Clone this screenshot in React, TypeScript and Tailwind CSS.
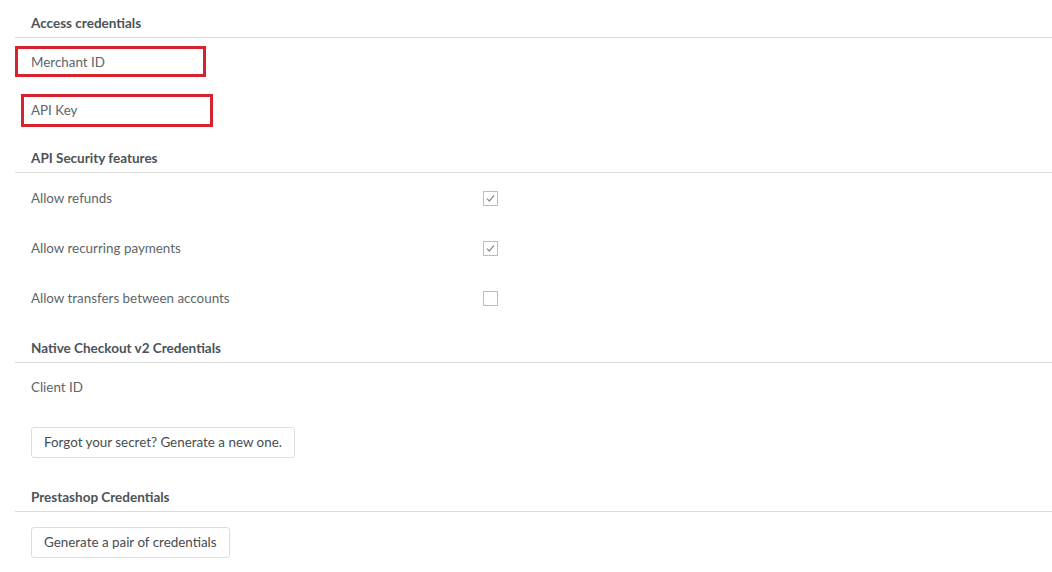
import React from "react";

// Settings panel: API credentials and security toggles

function SectionHeader({ title, className = "" }: { title: string; className?: string }) {
  return (
    <div className={`border-b border-[#dcdcdc] px-4 pb-[5px] ${className}`}>
      <h3 className="text-[13.5px] font-bold leading-[17px] text-[#4b5358]">{title}</h3>
    </div>
  );
}

function Checkbox({ checked }: { checked: boolean }) {
  return (
    <span className="flex h-[15px] w-[15px] items-center justify-center border border-[#bdbdbd] bg-white">
      {checked && (
        <svg width="11" height="11" viewBox="0 0 11 11" fill="none">
          <path d="M2.2 5.8 L4.4 8 L8.8 2.6" stroke="#8a8a8a" strokeWidth="1.2" strokeLinecap="round" strokeLinejoin="round" />
        </svg>
      )}
    </span>
  );
}

function ToggleRow({ label, checked }: { label: string; checked: boolean }) {
  return (
    <div className="flex h-[50px] items-center px-4">
      <span className="w-[452px] text-[13.4px] text-[#5d656a]">{label}</span>
      <Checkbox checked={checked} />
    </div>
  );
}

function OutlineButton({ children }: { children: React.ReactNode }) {
  return (
    <button className="h-[31px] rounded-[3px] border border-[#dedede] bg-white px-3 text-[13.4px] text-[#454d52]">
      {children}
    </button>
  );
}

export default function App() {
  return (
    <div
      className="min-h-screen bg-white pl-[15px] pt-[15px]"
      style={{ fontFamily: "Lato, 'Open Sans', sans-serif" }}
    >
      <SectionHeader title="Access credentials" />

      <div className="mt-[8px] flex h-[31px] w-[191px] items-center border-[3px] border-[#d8232e] pl-[13px] pt-[1px] text-[13.4px] text-[#5d656a]">
        Merchant ID
      </div>
      <div className="ml-[6px] mt-[17px] flex h-[33px] w-[192px] items-center border-[3px] border-[#d8232e] pl-[7px] text-[13.4px] text-[#5d656a]">
        API Key
      </div>

      <SectionHeader title="API Security features" className="mt-[23px]" />
      <ToggleRow label="Allow refunds" checked />
      <ToggleRow label="Allow recurring payments" checked />
      <ToggleRow label="Allow transfers between accounts" checked={false} />

      <SectionHeader title="Native Checkout v2 Credentials" className="mt-[17px]" />
      <div className="flex h-[48px] items-center px-4 text-[13.4px] text-[#5d656a]">Client ID</div>
      <div className="mt-[16px] px-4">
        <OutlineButton>Forgot your secret? Generate a new one.</OutlineButton>
      </div>

      <SectionHeader title="Prestashop Credentials" className="mt-[31px]" />
      <div className="mt-[15px] px-4">
        <OutlineButton>Generate a pair of credentials</OutlineButton>
      </div>
    </div>
  );
}
